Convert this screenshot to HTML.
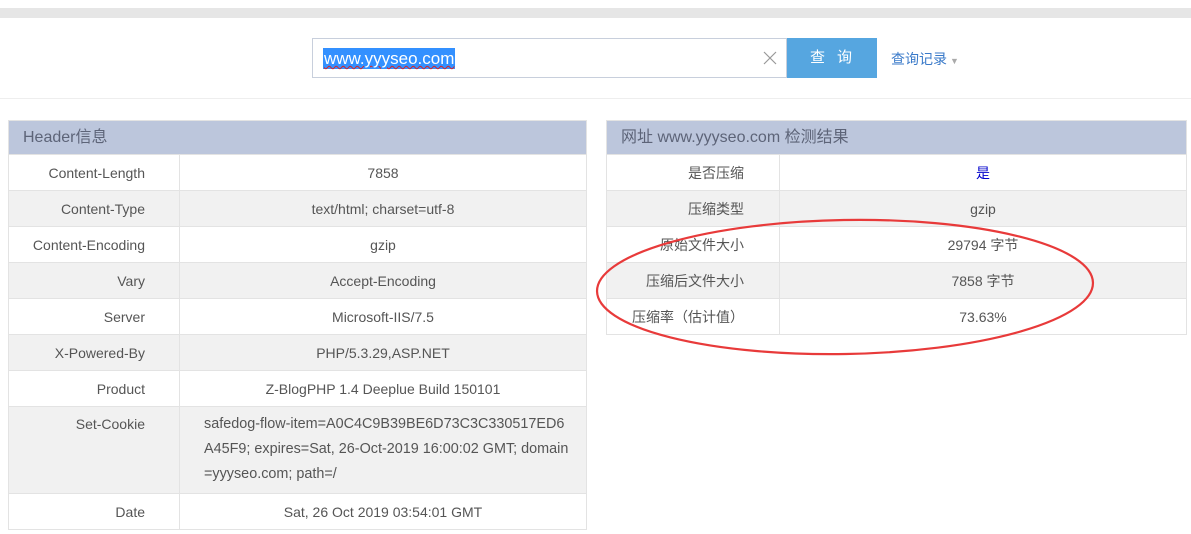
<!DOCTYPE html>
<html><head><meta charset="utf-8"><style>
body{margin:0;width:1191px;height:534px;background:#fff;font-family:"Liberation Sans","Noto Sans CJK SC",sans-serif;color:#555;font-size:14px;position:relative;overflow:hidden}
.bar{position:absolute;left:0;top:8px;width:1191px;height:10px;background:#e6e6e6}
.inp{position:absolute;left:312px;top:38px;width:473px;height:38px;border:1px solid #c8cfdc;background:#fff}
.sel{position:absolute;left:10px;top:9px;background:#3390ff;color:#fff;font-size:17px;line-height:21px;padding:0 1px;text-decoration:underline wavy #d22;text-decoration-thickness:1px}
.x{position:absolute;left:450px;top:12px}
.btn{position:absolute;left:787px;top:38px;width:90px;height:40px;background:#56a6e0;color:#fff;font-size:15px;line-height:40px;text-align:center;letter-spacing:12px;text-indent:10px}
.hist{position:absolute;left:891px;top:49px;color:#3a7ac9;font-size:14px}
.hist span{color:#aaa;font-size:9px;margin-left:3px}
.div{position:absolute;left:0;top:98px;width:1191px;height:1px;background:#eee}
table{position:absolute;border-collapse:collapse;table-layout:fixed}
td,th{border:1px solid #e3e3e3;height:35px;padding:0}
th{background:#bcc6dc;text-align:left;font-weight:normal;font-size:16px;color:#5d6478;padding-left:14px;height:33px;line-height:33px}
tr:nth-child(odd) td{background:#f1f1f1}
td.l{text-align:right}
td.v{text-align:center}
#t1{left:8px;top:120px;width:579px}
#t1 td.l{padding-right:34px}
#t2{left:606px;top:120px;width:581px}
#t2 td.l{padding-right:35px}
.sc{line-height:25px;padding:5px 14px 6px 24px;text-align:left!important;word-break:break-all;font-size:14.4px}
</style></head><body>
<div class="bar"></div>
<div class="inp"><span class="sel">www.yyyseo.com</span><svg class="x" width="14" height="14"><path d="M1 1L13 13M13 1L1 13" stroke="#999" stroke-width="1.2"/></svg></div>
<div class="btn">查询</div>
<div class="hist">查询记录<span>▼</span></div>
<div class="div"></div>
<table id="t1"><colgroup><col style="width:171px"><col></colgroup>
<tr><th colspan="2">Header信息</th></tr>
<tr><td class="l">Content-Length</td><td class="v">7858</td></tr>
<tr><td class="l">Content-Type</td><td class="v">text/html; charset=utf-8</td></tr>
<tr><td class="l">Content-Encoding</td><td class="v">gzip</td></tr>
<tr><td class="l">Vary</td><td class="v">Accept-Encoding</td></tr>
<tr><td class="l">Server</td><td class="v">Microsoft-IIS/7.5</td></tr>
<tr><td class="l">X-Powered-By</td><td class="v">PHP/5.3.29,ASP.NET</td></tr>
<tr><td class="l">Product</td><td class="v">Z-BlogPHP 1.4 Deeplue Build 150101</td></tr>
<tr><td class="l" style="vertical-align:top;padding-top:9px;height:75px">Set-Cookie</td><td class="v sc">safedog-flow-item=A0C4C9B39BE6D73C3C330517ED6A45F9; expires=Sat, 26-Oct-2019 16:00:02 GMT; domain=yyyseo.com; path=/</td></tr>
<tr><td class="l">Date</td><td class="v">Sat, 26 Oct 2019 03:54:01 GMT</td></tr>
</table>
<table id="t2"><colgroup><col style="width:173px"><col></colgroup>
<tr><th colspan="2">网址 www.yyyseo.com 检测结果</th></tr>
<tr><td class="l">是否压缩</td><td class="v" style="color:#00c">是</td></tr>
<tr><td class="l">压缩类型</td><td class="v">gzip</td></tr>
<tr><td class="l">原始文件大小</td><td class="v">29794 字节</td></tr>
<tr><td class="l">压缩后文件大小</td><td class="v">7858 字节</td></tr>
<tr><td class="l">压缩率（估计值）</td><td class="v">73.63%</td></tr>
</table>
<svg style="position:absolute;left:0;top:0" width="1191" height="534"><ellipse cx="845" cy="287" rx="248" ry="67" fill="none" stroke="#e83a3a" stroke-width="2.2" transform="rotate(-1 845 287)"/></svg>
</body></html>
